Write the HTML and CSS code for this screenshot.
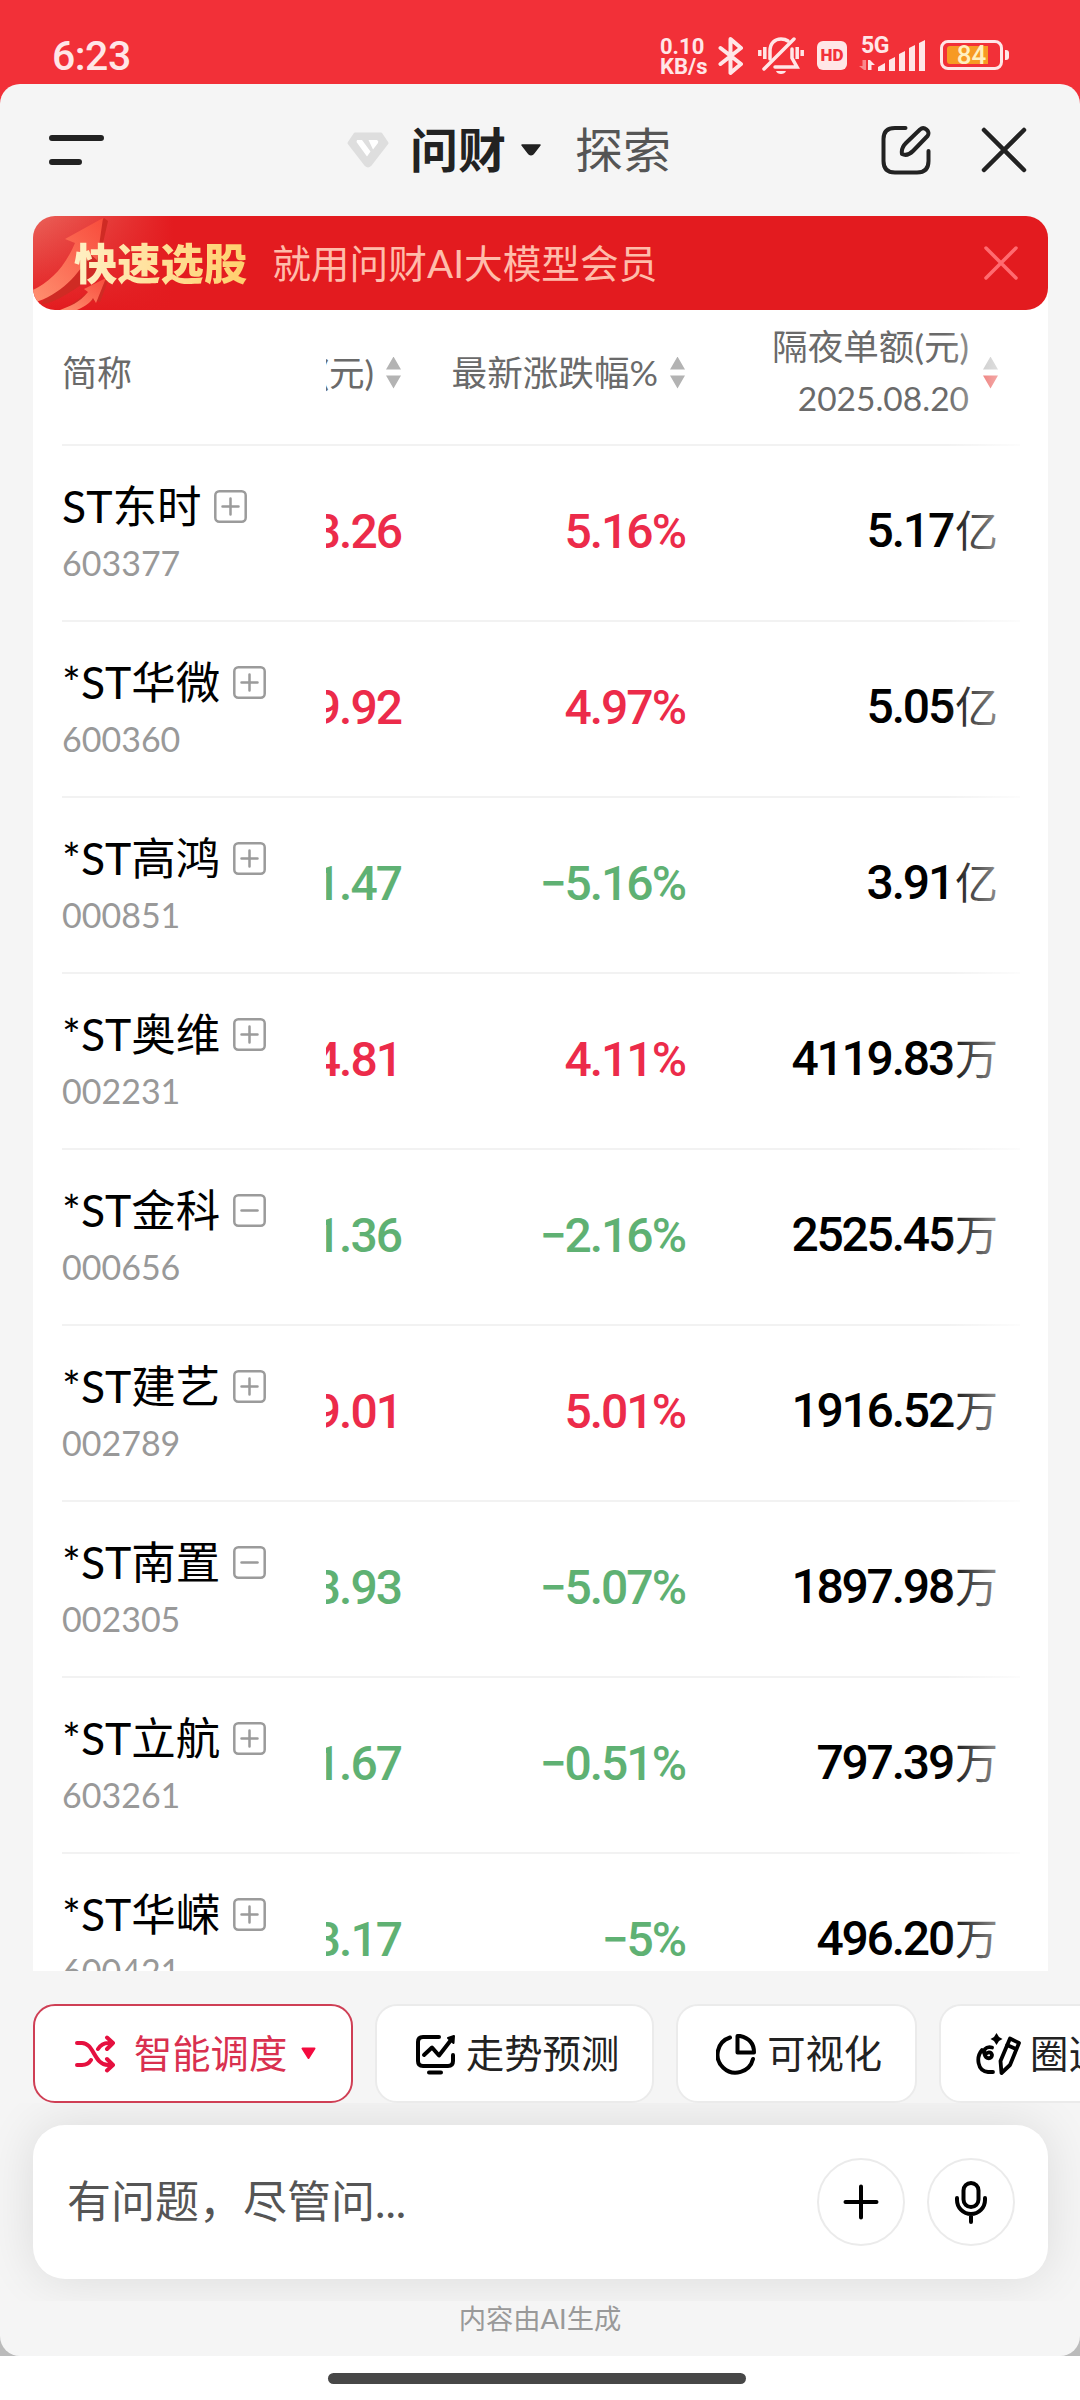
FILE: index.html
```html
<!DOCTYPE html>
<html lang="zh-CN">
<head>
    <meta charset="UTF-8">
    <meta name="viewport" content="width=device-width, initial-scale=1.0">
    <title>问财</title>
    <link rel="stylesheet" href="styles.css">
</head>
<body>
    <div class="status-bar">
        <span class="time">6:23</span>
        <div class="status-icons">
            <div class="net-speed"><span>0.10</span><span>KB/s</span></div>
            <svg class="bluetooth" width="26" height="40" viewBox="0 0 26 40" fill="none" stroke="#ffe6e7" stroke-width="4" stroke-linejoin="round" stroke-linecap="round">
                <path d="M2.500 12 L23 28 L12.500 37 V3 L23 12 L2.500 28"/>
            </svg>
            <svg class="bell" width="46" height="40" viewBox="0 0 46 40" fill="none" stroke="#ffe6e7" stroke-width="3.500" stroke-linecap="round">
                <path d="M1.800 14 V20 M6.800 11 V23 M39.200 11 V23 M44.200 14 V20" stroke-linecap="butt"/>
                <path d="M6 33 L36 3"/>
                <path d="M12 23 V15 C12 7 17 3 23 3 C26 3 28 3.500 30 5 M34 13 V22 L39 31 H17"/>
                <path d="M18 35 H28 C27 39 19 39 18 35Z" fill="#ffe6e7" stroke="none"/>
            </svg>
            <span class="hd">HD</span>
            <div class="signal">
                <span class="network">5G</span>
                <svg width="68" height="36" viewBox="0 0 68 36">
                    <path d="M7 24 V34 H5 L0 30 H3.500 V24Z" fill="#f9898d"/>
                    <path d="M9 24 H11 L16 29 H12.500 V34 H9Z" fill="#ffe6e7"/>
                    <path d="M19 35 V31 L26 27 V35Z M30 35 V24 L36 21 V35Z M40 35 V18 L46 15 V35Z M50 35 V12 L56 9 V35Z M60 35 V7 L66 4 V35Z" fill="#ffe6e7"/>
                </svg>
            </div>
            <div class="battery"><span class="battery-level"></span><b>84</b></div>
            <span class="battery-cap"></span>
        </div>
    </div>

    <div class="sheet-wrap">
    <div class="sheet">
        <header class="header">
            <svg class="menu" width="56" height="32" viewBox="0 0 56 32" stroke="#222" stroke-width="6" stroke-linecap="round">
                <path d="M3 4 H52 M3 28 H30"/>
            </svg>
            <div class="tabs">
                <svg width="44" height="38" viewBox="0 0 44 38">
                    <path d="M9 3 H35 L41 12 L24 34 Q22 36 20 34 L3 12Z" fill="#dedede" stroke="#dedede" stroke-width="3" stroke-linejoin="round"/>
                    <path d="M11 9 H16 L24.500 20.500 L21 25.500 L10.500 11Z M22.500 9 H31 Q33 10 32 12 L27 18.500Z" fill="#fff"/>
                </svg>
                <b class="tab-active">问财</b>
                <svg class="caret" width="22" height="14" viewBox="0 0 22 14"><path d="M2 2 H20 L13 11 Q11 12.500 9 11Z" fill="#222" stroke="#222" stroke-width="1.500" stroke-linejoin="round"/></svg>
                <span class="tab">探索</span>
            </div>
            <svg class="edit" width="50" height="50" viewBox="0 0 50 50" fill="none" stroke="#222" stroke-width="4" stroke-linecap="round" stroke-linejoin="round">
                <path d="M24.500 3 H14 Q2.500 3 2.500 14 V36 Q2.500 47.500 14 47.500 H36 Q47.500 47.500 47.500 36 V26"/>
                <path d="M21 29 C20 24 22 21 25 18 L39 4.500 C43 1 50 6 46.500 11 L32 26 C29 29 25 31 21 29Z"/>
            </svg>
            <svg class="close" width="46" height="46" viewBox="0 0 46 46" stroke="#222" stroke-width="4.500" stroke-linecap="round">
                <path d="M3 3 L43 43 M43 3 L3 43"/>
            </svg>
        </header>

        <div class="content">
            <div class="banner">
                <svg class="banner-art" width="160" height="94" viewBox="0 0 160 94">
                    <defs>
                        <linearGradient id="arrow" x1="0" y1="1" x2="1" y2="0">
                            <stop offset="0" stop-color="#ff9070"/>
                            <stop offset="1" stop-color="#f84c3c"/>
                        </linearGradient>
                    </defs>
                    <path d="M71 2 L75 5 L63 58 C44 72 22 88 8 88Z" fill="#cf2b24"/>
                    <path d="M70 2 L32 23 L42 27 C32 51 17 66 0 74 V87 C28 79 46 58 57 38 L64 44Z" fill="url(#arrow)"/>
                    <path d="M76 62 L67 86 L61 84 L38 94 H30Z" fill="#cf2b24"/>
                    <path d="M73 62 L51 73 L55 76 C46 87 37 90 27 94 H44 C53 90 58 86 60 82 L63 87Z" fill="url(#arrow)"/>
                </svg>
                <b class="banner-title">快速选股</b>
                <span class="banner-text">就用问财AI大模型会员</span>
                <svg width="34" height="34" viewBox="0 0 34 34" stroke="#ff6b70" stroke-width="3.500" stroke-linecap="round">
                    <path d="M2 2 L32 32 M32 2 L2 32"/>
                </svg>
            </div>

            <div class="table">
                <div class="row head">
                    <div class="name">简称</div>
                    <div class="cells">
                        <div class="price"><span>(元)</span><i class="sort"></i></div>
                        <div class="change"><span>最新涨跌幅%</span><i class="sort"></i></div>
                        <div class="amount"><span>隔夜单额(元)<br><span class="date">2025.08.20</span></span><i class="sort desc"></i></div>
                    </div>
                </div>
                <div id="rows"></div>
                <div class="fade"></div>
            </div>
        </div>

        <div class="chips">
            <div class="chip active">
                <svg width="42" height="38" viewBox="0 0 42 38" fill="none" stroke="#e5103f" stroke-width="4" stroke-linecap="round" stroke-linejoin="round">
                    <path d="M3 8 H8 C20 8 20 30 34 30 H39 M3 30 H8 Q14 30 17 25 M24 14 Q28 8 34 8 H39 M33 2.500 L39 8 L33 14 M33 24 L39 30 L33 35.500"/>
                </svg>
                <span>智能调度</span>
                <svg class="chip-caret" width="15" height="13" viewBox="0 0 15 13"><path d="M1.500 1.500 H13.500 L7.500 11Z" fill="#f40b3f" stroke="#f40b3f" stroke-width="2" stroke-linejoin="round"/></svg>
            </div>
            <div class="chip">
                <svg width="42" height="42" viewBox="0 0 42 42" fill="none" stroke="#000" stroke-width="4" stroke-linecap="round" stroke-linejoin="round">
                    <path d="M24 4 H8 Q3 4 3 9 V28 Q3 33 8 33 H33 Q38 33 38 28 V22 M9 22 L17 14.500 L24 22.500 L36 7 M14 39.500 H26"/>
                    <path d="M33 5 L39 3 L38.500 10Z" fill="#000" stroke-width="2"/>
                </svg>
                <span>走势预测</span>
            </div>
            <div class="chip">
                <svg width="42" height="42" viewBox="0 0 42 42" fill="none" stroke="#000" stroke-width="4" stroke-linecap="round" stroke-linejoin="round">
                    <path d="M14 4.500 A18 18 0 1 0 37 26"/>
                    <path d="M21.500 3 H24 Q38 6 38 19.500 H21.500Z"/>
                </svg>
                <span>可视化</span>
            </div>
            <div class="chip draw">
                <svg width="46" height="42" viewBox="0 0 46 42" fill="none" stroke="#000" stroke-width="3.800" stroke-linecap="round" stroke-linejoin="round">
                    <path d="M20.500 0 L23 4 L26.500 6 L23 8 L20.500 12 L18 8 L14.500 6 L18 4Z" fill="#000" stroke="none"/>
                    <path d="M16 14.500 C9 13 7 18 8.500 21 C10 27 16 26 16 22 C15 18 11 19 9 22 M6 17 C0 24 1 38 12 39 H17"/>
                    <path d="M34 5.500 L43 10 L34 32 L25.500 40 L24.500 28Z M31 12 L40 16"/>
                </svg>
                <span>圈选</span>
            </div>
        </div>

        <div class="input-area">
            <div class="input-box">
                <span class="placeholder">有问题，尽管问...</span>
                <div class="round-btn">
                    <svg width="36" height="36" viewBox="0 0 36 36" stroke="#000" stroke-width="4" stroke-linecap="round"><path d="M18 2.500 V33.500 M2.500 18 H33.500"/></svg>
                </div>
                <div class="round-btn">
                    <svg width="34" height="44" viewBox="0 0 34 44" fill="none" stroke="#000" stroke-width="4" stroke-linecap="round"><rect x="9.500" y="3" width="15" height="24" rx="7.500"/><path d="M3 18 V20 A14 14 0 0 0 31 20 V18 M17 35 V42"/></svg>
                </div>
            </div>
        </div>
        <p class="notice">内容由AI生成</p>
    </div>
    </div>

    <div class="home-bar"></div>

    <script>
        const stocks = [
            { name: 'ST东时', code: '603377', price: '3.26', change: '5.16%', amount: '5.17', unit: '亿', plus: true },
            { name: '*ST华微', code: '600360', price: '9.92', change: '4.97%', amount: '5.05', unit: '亿', plus: true },
            { name: '*ST高鸿', code: '000851', price: '1.47', change: '−5.16%', amount: '3.91', unit: '亿', plus: true },
            { name: '*ST奥维', code: '002231', price: '4.81', change: '4.11%', amount: '4119.83', unit: '万', plus: true },
            { name: '*ST金科', code: '000656', price: '1.36', change: '−2.16%', amount: '2525.45', unit: '万', plus: false },
            { name: '*ST建艺', code: '002789', price: '9.01', change: '5.01%', amount: '1916.52', unit: '万', plus: true },
            { name: '*ST南置', code: '002305', price: '3.93', change: '−5.07%', amount: '1897.98', unit: '万', plus: false },
            { name: '*ST立航', code: '603261', price: '1.67', change: '−0.51%', amount: '797.39', unit: '万', plus: true },
            { name: '*ST华嵘', code: '600421', price: '3.17', change: '−5%', amount: '496.20', unit: '万', plus: true }
        ];

        document.getElementById('rows').innerHTML = stocks.map(s => {
            const color = s.change.startsWith('−') ? 'down' : 'up';
            const icon = s.plus ? 'M8.5 16.500 H24.500 M16.500 8.500 V24.500' : 'M8.5 16.500 H24.500';
            return `
            <div class="row">
                <div class="name">
                    <div class="title"><span>${s.name}</span><svg width="33" height="33" viewBox="0 0 33 33" fill="none" stroke="#9b9b9b" stroke-width="2.500" stroke-linecap="round"><rect x="1.300" y="1.300" width="30.400" height="30.400" rx="4"/><path d="${icon}"/></svg></div>
                    <div class="code">${s.code}</div>
                </div>
                <div class="cells">
                    <div class="price ${color}">${s.price}</div>
                    <div class="change ${color}">${s.change}</div>
                    <div class="amount">${s.amount}<span class="unit">${s.unit}</span></div>
                </div>
            </div>`;
        }).join('');
    </script>
</body>
</html>
```

FILE: styles.css
```css
* {
    box-sizing: border-box;
}
body {
    margin: 0;
    width: 1080px;
    height: 2400px;
    overflow: hidden;
    display: flex;
    flex-direction: column;
    background: #fff;
    font-family: Lato, "Noto Sans CJK SC", sans-serif;
    color: #222;
}
svg {
    display: block;
    flex: none;
}

/* status bar */
.status-bar {
    height: 84px;
    flex: none;
    padding: 36px 71px 0 52px;
    display: flex;
    justify-content: space-between;
    background: #f23038;
    color: #ffe6e7;
    font-family: Roboto, sans-serif;
}
.time {
    font-size: 41px;
    line-height: 40px;
    font-weight: 500;
    letter-spacing: -0.5px;
}
.status-icons {
    display: flex;
    height: 40px;
}
.net-speed {
    width: 48px;
    margin: 1px 10px 0 0;
    display: flex;
    flex-direction: column;
    font-size: 22px;
    line-height: 20px;
    font-weight: 700;
}
.bluetooth {
    margin-right: 14px;
}
.bell {
    margin-right: 13px;
}
.hd {
    width: 30px;
    height: 29px;
    margin: 5px 12px 0 0;
    border-radius: 6px;
    background: #ffe6e7;
    color: #f23038;
    font-size: 17px;
    line-height: 29px;
    font-weight: 900;
    text-align: center;
}
.signal {
    position: relative;
    width: 68px;
    margin-right: 13px;
}
.network {
    position: absolute;
    left: 2px;
    top: -2px;
    font-size: 23px;
    line-height: 24px;
    font-weight: 700;
    letter-spacing: -0.5px;
}
.battery {
    position: relative;
    width: 63px;
    height: 30px;
    margin-top: 4px;
    border: 3px solid #ffe6e7;
    border-radius: 8px;
    text-align: center;
}
.battery b {
    position: relative;
    display: block;
    font-size: 26px;
    line-height: 25px;
    font-weight: 500;
    color: #fff0c0;
}
.battery-level {
    position: absolute;
    left: 4px;
    top: 3px;
    width: 41px;
    height: 18px;
    border-radius: 3px 0 0 3px;
    background: #f79a23;
}
.battery-cap {
    width: 4px;
    height: 10px;
    margin: 14px 0 0 2px;
    border-radius: 0 3px 3px 0;
    background: #ffe6e7;
}

/* page sheet */
.sheet-wrap {
    flex: none;
    background: linear-gradient(#f23038 0, #f23038 60px, #bbb 60px);
}
.sheet {
    height: 2272px;
    display: flex;
    flex-direction: column;
    border-radius: 20px;
    overflow: hidden;
    background: #f5f5f5;
}
.header {
    height: 132px;
    flex: none;
    display: flex;
    align-items: center;
    padding: 0 53px 0 49px;
}
.menu {
    margin-right: 241px;
}
.tabs {
    display: flex;
    align-items: center;
    font-size: 48px;
    line-height: 60px;
}
.tab-active {
    margin-left: 20px;
    font-weight: 700;
}
.caret {
    margin-left: 14px;
}
.tab {
    margin-left: 33px;
    color: #555;
}
.edit {
    margin-left: auto;
}
.close {
    margin-left: 50px;
}

/* banner */
.content {
    height: 1755px;
    flex: none;
    margin: 0 32px 0 33px;
    background: linear-gradient(#f5f5f5 40px, #fff 40px);
    overflow: hidden;
}
.banner {
    position: relative;
    height: 94px;
    display: flex;
    align-items: center;
    padding: 0 30px 0 41px;
    border-radius: 22px;
    overflow: hidden;
    background: linear-gradient(to right, rgba(227, 27, 31, 0), #e31b1f 140px), linear-gradient(#ea6259, #e31b1f);
}
.banner-art {
    position: absolute;
    left: 0;
    top: 0;
}
.banner-title {
    position: relative;
    font-size: 43.3px;
    line-height: 60px;
    font-weight: 900;
    background: linear-gradient(to right, #fff0c4, #ffcf6c);
    -webkit-background-clip: text;
    background-clip: text;
    color: transparent;
}
.banner-text {
    flex: 1;
    margin-left: 25px;
    font-size: 38.7px;
    line-height: 60px;
    color: #ffbcaa;
}

/* table */
.table {
    position: relative;
    padding: 0 28px 0 29px;
}
.row {
    height: 176px;
    display: flex;
    border-bottom: 2px solid #f2f2f2;
}
.name {
    width: 264px;
    flex: none;
}
.cells {
    flex: 1;
    display: flex;
    align-items: center;
    overflow: hidden;
    padding-bottom: 3px;
    font-family: Roboto, "Noto Sans CJK SC", sans-serif;
    font-size: 48px;
    line-height: 60px;
    font-weight: 500;
    letter-spacing: -2px;
    white-space: nowrap;
    color: #000;
}
.price {
    width: 75px;
    flex: none;
    display: flex;
    justify-content: flex-end;
}
.change {
    width: 284px;
    flex: none;
    text-align: right;
}
.amount {
    width: 313px;
    flex: none;
    text-align: right;
    letter-spacing: -2.2px;
}
.unit {
    margin-left: 2px;
    font-size: 43px;
    font-weight: 400;
    letter-spacing: 0;
}
.up {
    color: #ec2b4a;
}
.down {
    color: #5fb173;
}
.title {
    display: flex;
    align-items: center;
    height: 60px;
    margin-top: 30px;
    font-size: 44.5px;
    color: #000;
}
.title span {
    padding-bottom: 5px;
}
.title svg {
    margin-left: 13px;
}
.code {
    margin-top: 7px;
    font-size: 34px;
    line-height: 40px;
    color: #999;
}
.head {
    height: 136px;
    align-items: center;
    font-size: 35px;
    color: #6a6a6a;
}
.head .name {
    padding-bottom: 13px;
}
.head .cells {
    height: 134px;
    padding-bottom: 9px;
    font-family: Lato, "Noto Sans CJK SC", sans-serif;
    font-size: 35.6px;
    line-height: 51px;
    font-weight: 400;
    letter-spacing: 0;
    color: #6a6a6a;
}
.head .price,
.head .change,
.head .amount {
    display: flex;
    align-items: center;
    justify-content: flex-end;
    letter-spacing: 0;
}
.date {
    font-size: 33.5px;
}
.sort {
    width: 15px;
    height: 32px;
    flex: none;
    margin-left: 12px;
    background: #b3b3b3;
    clip-path: polygon(50% 0, 100% 13px, 0 13px, 50% 0, 50% 32px, 0 19px, 100% 19px, 50% 32px);
}
.sort.desc {
    margin-left: 14px;
    background: linear-gradient(#b3b3b3 50%, #e53935 50%);
}
/* fades the right edge of the scrolling columns */
.fade {
    position: absolute;
    top: 0;
    right: 0;
    bottom: 0;
    width: 103px;
    background: linear-gradient(to right, rgba(255, 255, 255, 0), #fff 95px);
}

/* quick actions */
.chips {
    height: 132px;
    flex: none;
    display: flex;
    gap: 22px;
    padding: 33px 0 0 33px;
    overflow: hidden;
    font-size: 38.3px;
    white-space: nowrap;
}
.chip {
    height: 99px;
    flex: none;
    display: flex;
    align-items: center;
    padding: 0 33px 0 38px;
    border: 2px solid #ebebeb;
    border-radius: 22px;
    background: #fff;
}
.chip span {
    margin-left: 9px;
    padding-bottom: 5px;
}
.chip.active {
    width: 320px;
    padding-left: 39px;
    border-color: #cf3f55;
    color: #d9304f;
}
.chip.active span {
    margin-left: 18px;
}
.chip-caret {
    margin-left: 14px;
}
.chip.draw {
    padding-left: 35px;
}
.chip.draw span {
    margin-left: 8px;
}

/* input */
.input-area {
    height: 198px;
    flex: none;
    padding: 22px 32px 0 33px;
    overflow: hidden;
}
.input-box {
    height: 154px;
    display: flex;
    align-items: center;
    padding: 0 33px 0 34px;
    border-radius: 32px;
    background: #fff;
    box-shadow: 0 0 50px rgba(0, 0, 0, 0.11);
}
.placeholder {
    flex: 1;
    padding-bottom: 6px;
    font-size: 44px;
    color: #555;
}
.round-btn {
    width: 88px;
    height: 88px;
    margin-left: 22px;
    display: flex;
    align-items: center;
    justify-content: center;
    border: 2px solid #ebebeb;
    border-radius: 50%;
}
.notice {
    margin: 0;
    font-size: 27.3px;
    line-height: 36px;
    text-align: center;
    color: #999;
}
.home-bar {
    width: 418px;
    height: 11px;
    margin: 17px 0 0 328px;
    border-radius: 6px;
    background: #474747;
}
```
